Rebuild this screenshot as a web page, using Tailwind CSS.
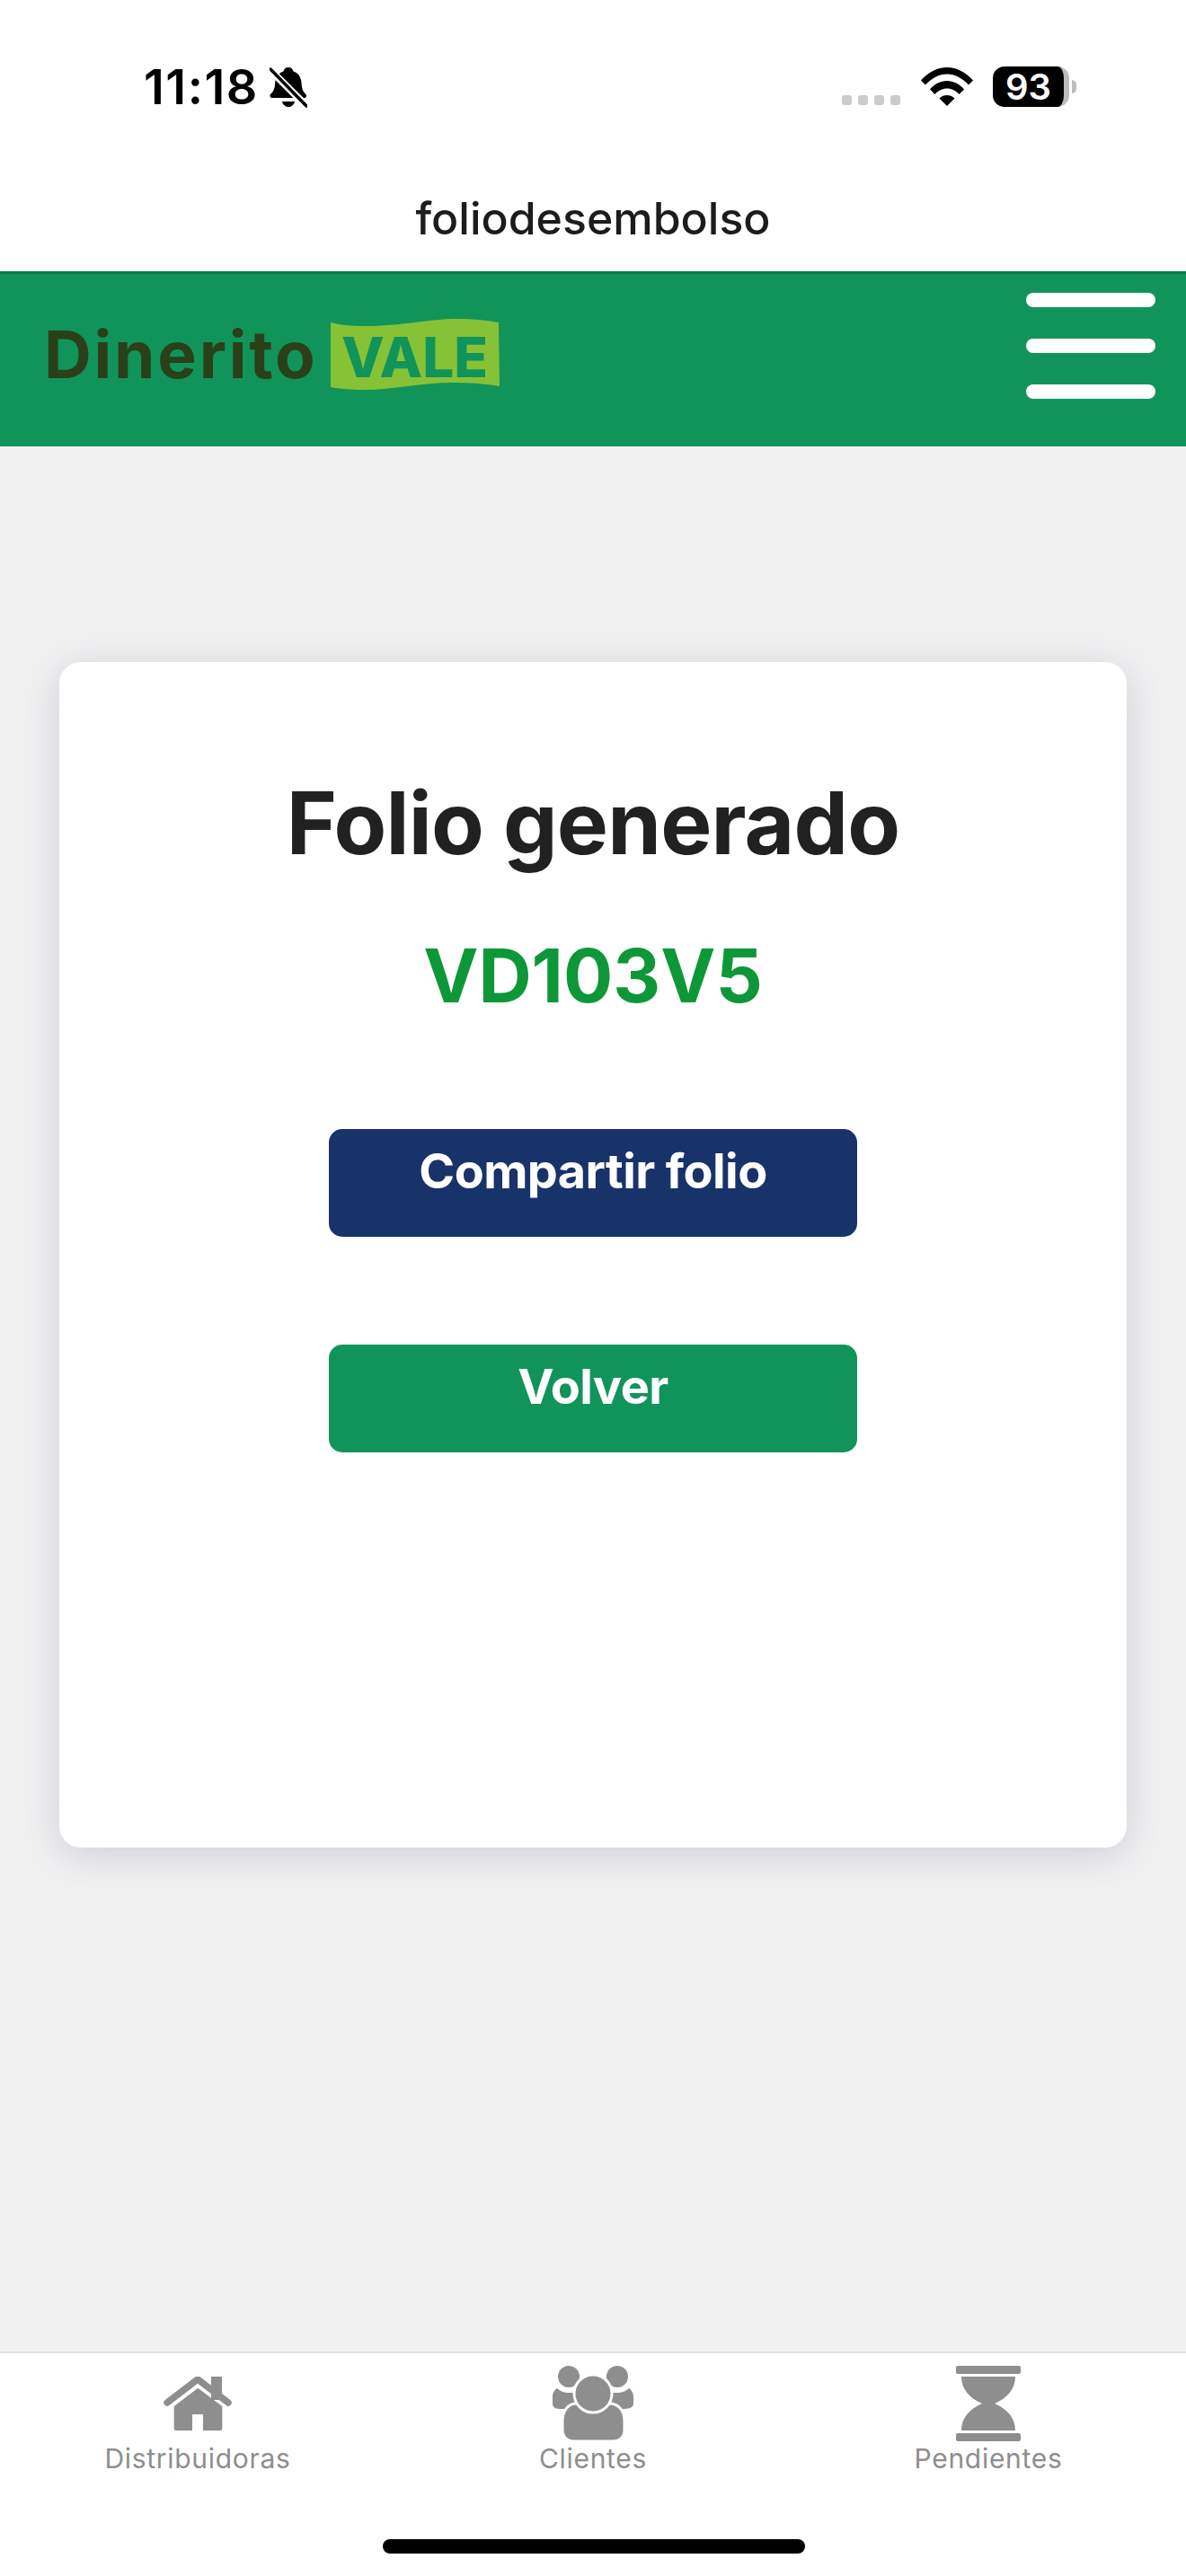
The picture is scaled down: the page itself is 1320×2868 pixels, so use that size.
<!doctype html>
<html lang="es"><head><meta charset="utf-8"><script src="https://cdn.jsdelivr.net/npm/@tailwindcss/browser@4"></script></head>
<body class="bg-[#f1f1f2]">
<div class="w-[1320px] h-[2868px] flex flex-col font-['Inter','Liberation_Sans',sans-serif] overflow-hidden">
  <!-- status bar -->
  <div class="h-[190px] bg-white flex items-start justify-between pl-[160px] pr-[122px] pt-[70px] shrink-0">
    <div class="flex items-center gap-[12px] h-[54px]">
      <span class="text-[54px] leading-[54px] font-semibold text-black tracking-[1.5px]">11:18</span>
      <svg width="42" height="46" viewBox="0 0 42 46" class="mt-[2px]"><path d="M21 0c3 0 5 2 5.500 4.500C32 6 35 11 35.500 17c.3 6 1.500 10 5 13 1 1.500.5 4-2 4H3c-2.500 0-3-2.500-2-4 3.500-3 5-7 5.200-13C6.500 11 10 6 15.500 4.500 16 2 18 0 21 0z" fill="#000"/><path d="M14 38h14c-1 4-4 6-7 6s-6-2-7-6z" fill="#000"/><path d="M0 2l41 41" stroke="#fff" stroke-width="8"/><path d="M1 2l40 41" stroke="#000" stroke-width="3.500" stroke-linecap="round"/></svg>
    </div>
    <div class="flex items-start">
      <div class="flex gap-[7px] mt-[36px] mr-[23px]"><i class="w-[11px] h-[11px] rounded-[3px] bg-[#cbcbcb]"></i><i class="w-[11px] h-[11px] rounded-[3px] bg-[#cbcbcb]"></i><i class="w-[11px] h-[11px] rounded-[3px] bg-[#cbcbcb]"></i><i class="w-[11px] h-[11px] rounded-[3px] bg-[#cbcbcb]"></i></div>
      <svg width="58" height="43" viewBox="0 0 58 43" class="mt-[5px] mr-[22px]"><path d="M0 14.500C8 5.500 18 0 29 0s21 5.500 29 14.500l-5 5C46 12 38 7.500 29 7.500S12 12 5 19.500z" fill="#000"/><path d="M10 24.500C15 18.500 22 15 29 15s14 3.500 19 9.500l-5.500 5.500C39 26 34 23.500 29 23.500S19 26 15.500 30z" fill="#000"/><path d="M20.500 34.500C23 32 26 31 29 31s6 1 8.500 3.500L29 43z" fill="#000"/></svg>
      <div class="flex items-center mt-[4px]">
        <div class="w-[85px] h-[45px] rounded-[13px] bg-black border-r-[6px] border-[#bdbdbd] flex items-center justify-center">
          <span class="text-white text-[40px] leading-none font-semibold">93</span>
        </div>
        <i class="ml-[3px] w-[5px] h-[15px] rounded-r-[5px] bg-[#bdbdbd]"></i>
      </div>
    </div>
  </div>
  <!-- page title -->
  <div class="h-[112px] bg-white shrink-0 flex justify-center">
    <span class="text-[50px] leading-[106px] font-medium text-[#1c1c1e]">foliodesembolso</span>
  </div>
  <!-- green header -->
  <div class="h-[195px] bg-[#11945a] border-t-[3px] border-[#0a7a4b] shrink-0 flex items-start justify-between pl-[49px] pr-[34px]">
    <div class="flex items-center mt-[50px] w-[509px] justify-between">
      <span class="text-[73px] leading-[80px] font-bold text-[#2a4018] tracking-[2.8px]">Dinerito</span>
      <svg width="190" height="80" viewBox="0 0 190 80"><path d="M0 4C12 7 24 8 37 8 80 8 110 0 141 0c19 0 34 2 46 4l1 71c-13-2-28-4-51-4-37 0-67 8-100 8-13 0-27-1-37-3z" fill="#87c136"/><text x="12" y="65" font-size="62" font-weight="800" fill="#11945a" textLength="163" lengthAdjust="spacingAndGlyphs" font-family="Inter, sans-serif">VALE</text></svg>
    </div>
    <div class="flex flex-col gap-[35px] mt-[21px]">
      <i class="block w-[144px] h-[16px] rounded-full bg-white"></i>
      <i class="block w-[144px] h-[16px] rounded-full bg-white"></i>
      <i class="block w-[144px] h-[16px] rounded-full bg-white"></i>
    </div>
  </div>
  <!-- main -->
  <main class="flex-1 pt-[240px] px-[66px]">
    <div class="h-[1320px] bg-white rounded-[24px] shadow-[0_8px_44px_rgba(70,70,100,0.2)] flex flex-col items-center pt-[124px]">
      <h1 class="text-[96px] leading-[110px] font-bold text-[#212121] tracking-[-0.8px]">Folio generado</h1>
      <p class="mt-[66px] text-[82px] leading-[100px] font-bold text-[#0e9739]">VD103V5</p>
      <button class="mt-[120px] w-[588px] h-[120px] rounded-[15px] bg-[#17336a] text-white text-[54px] leading-[60px] font-bold pb-[26px] tracking-[-0.6px]">Compartir folio</button>
      <button class="mt-[120px] w-[588px] h-[120px] rounded-[15px] bg-[#11945a] text-white text-[54px] leading-[60px] font-bold pb-[26px] tracking-[-0.6px]">Volver</button>
    </div>
  </main>
  <!-- tab bar -->
  <nav class="relative h-[250px] shrink-0 bg-white border-t-[2px] border-[#dfdfdf] grid grid-cols-3 pt-[14px]">
    <div class="flex flex-col items-center">
      <div class="h-[84px] flex items-center"><svg width="76" height="60" viewBox="0 0 76 60"><path d="M53 0h12v26H53z" fill="#8e8e8e"/><path d="M4 29 38 3l34 26" fill="none" stroke="#8e8e8e" stroke-width="7.500" stroke-linecap="round" stroke-linejoin="round"/><path d="M38.300 12.700 11.700 33v25a2 2 0 0 0 2 2H32V42h12v18h19.300a2 2 0 0 0 2-2V33z" fill="#8e8e8e"/></svg></div>
      <span class="text-[30px] leading-[38px] text-[#8e8e8e] tracking-[0.7px]">Distribuidoras</span>
    </div>
    <div class="flex flex-col items-center">
      <div class="h-[84px] flex items-center"><svg width="90" height="84" viewBox="0 0 90 84"><circle cx="18" cy="12" r="12" fill="#8e8e8e"/><circle cx="72" cy="12" r="12" fill="#8e8e8e"/><path d="M5 25c-3 2-5 5-5 10v7c0 3 2 6 8 6h72c7 0 10-3 10-6v-7c0-5-2-8-5-10-3 3-8 5-13 5H18c-5 0-10-2-13-5z" fill="#8e8e8e"/><path d="M25 42h40c9 1 15 8 15 20v9c0 8-5 13-13 13H24c-8 0-13-5-13-13v-9c0-12 6-19 14-20z" fill="#8e8e8e" stroke="#fff" stroke-width="3"/><circle cx="45" cy="31" r="21" fill="#8e8e8e" stroke="#fff" stroke-width="3"/></svg></div>
      <span class="text-[30px] leading-[38px] text-[#8e8e8e] tracking-[0.7px]">Clientes</span>
    </div>
    <div class="flex flex-col items-center">
      <div class="h-[84px] flex items-center"><svg width="72" height="84" viewBox="0 0 72 84"><rect width="72" height="9" rx="2" fill="#8e8e8e"/><rect y="75" width="72" height="9" rx="2" fill="#8e8e8e"/><path d="M6 12h60c0 14-9 24-23 30 14 6 23 16 23 30H6c0-14 9-24 23-30C15 36 6 26 6 12z" fill="#8e8e8e"/></svg></div>
      <span class="text-[30px] leading-[38px] text-[#8e8e8e] tracking-[0.7px]">Pendientes</span>
    </div>
    <i class="absolute left-[426px] top-[207px] w-[470px] h-[16px] rounded-full bg-black"></i>
  </nav>
</div>
</body></html>
